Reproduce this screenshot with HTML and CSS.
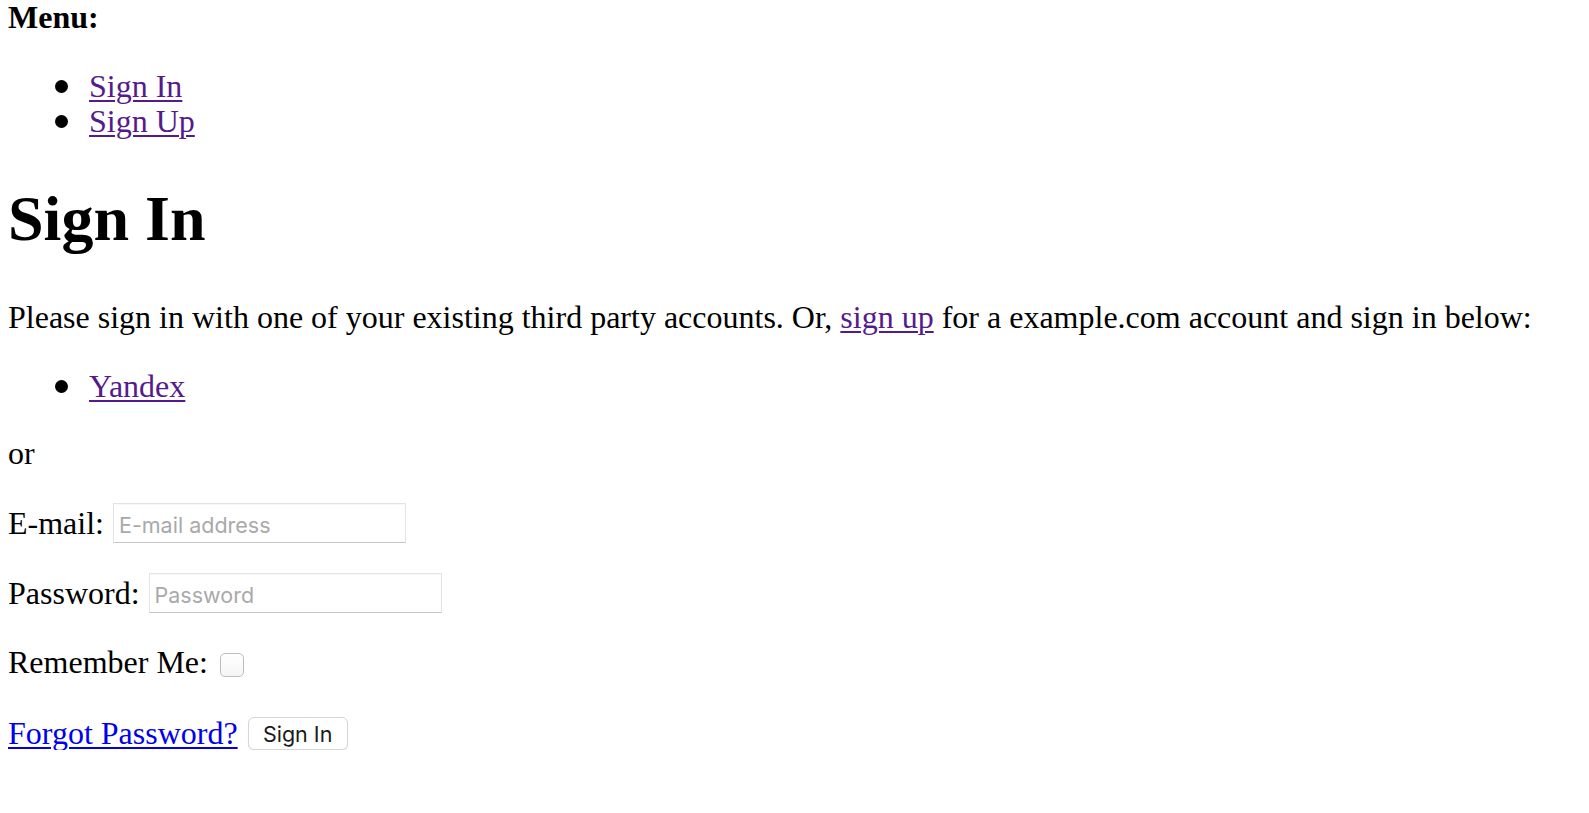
FILE: index.html
```html
<!DOCTYPE html>
<html lang="en">
<head>
<meta charset="utf-8">
<title>Sign In</title>
<link rel="stylesheet" href="styles.css">
</head>
<body>
<div class="menu-title">Menu:</div>
<ul class="menu">
  <li><a class="visited" href="#">Sign In</a></li>
  <li><a class="visited" href="#">Sign Up</a></li>
</ul>
<h1 class="page-title">Sign In</h1>
<p class="intro">Please sign in with one of your existing third party accounts. Or, <a class="visited" href="#">sign up</a> for a example.com account and sign in below:</p>
<ul class="providers">
  <li><a class="visited" href="#">Yandex</a></li>
</ul>
<p class="or">or</p>
<form class="login">
  <div class="row row-email">
    <label class="label" for="email">E-mail:</label>
    <input class="field" id="email" type="email" placeholder="E-mail address">
  </div>
  <div class="row row-password">
    <label class="label" for="password">Password:</label>
    <input class="field" id="password" type="password" placeholder="Password">
  </div>
  <div class="row row-remember">
    <label class="label" for="remember">Remember Me:</label>
    <input class="check" id="remember" type="checkbox">
  </div>
  <div class="row row-actions">
    <a class="forgot" href="#">Forgot Password?</a>
    <button class="submit" type="submit">Sign In</button>
  </div>
</form>
</body>
</html>
```

FILE: styles.css
```css
html, body {
  background: #ffffff;
}

body {
  margin: 0 8px;
  padding-top: 0;
  font-family: "Liberation Serif", "Times New Roman", serif;
  font-size: 32px;
  line-height: 34px;
  color: #000000;
}

a {
  color: #0000ee;
  text-decoration: underline;
  text-decoration-thickness: 2px;
  text-underline-offset: 3px;
}

a.visited {
  color: #551a8b;
}

.menu-title {
  font-weight: bold;
}

.menu,
.providers {
  list-style: none;
  padding-left: 81px;
}

.menu li,
.providers li {
  position: relative;
}

.menu li::before,
.providers li::before {
  content: "";
  position: absolute;
  left: -34px;
  top: 11px;
  width: 13px;
  height: 13px;
  border-radius: 50%;
  background: #000000;
}

.menu {
  margin: 35px 0 0;
}

.menu li + li {
  margin-top: 1px;
}

.page-title {
  margin: 47px 0 47px;
  font-size: 64px;
  line-height: 68px;
  font-weight: bold;
}

.intro {
  margin: 0 0 35px;
  white-space: nowrap;
}

.providers {
  margin: 0 0 33px;
}

.or {
  margin: 0 0 33px;
}

.login {
  margin: 0;
}

.row {
  display: flex;
  align-items: center;
  gap: 9px;
}

.row-password {
  margin-top: 30px;
}

.row-remember {
  margin-top: 32px;
  align-items: flex-start;
  gap: 12px;
}

.row-actions {
  margin-top: 37px;
  gap: 10px;
}

.field {
  box-sizing: border-box;
  flex: 0 0 293px;
  width: 293px;
  height: 40px;
  margin: 0;
  padding: 4px 5px 0;
  border: 1px solid #e3e3e3;
  border-bottom-color: #c4c4c4;
  border-radius: 0;
  background: #ffffff;
  box-shadow: inset 0 1px 1px rgba(0, 0, 0, 0.03);
  font-family: Inter, "Liberation Sans", sans-serif;
  font-size: 21.5px;
  color: #000000;
  outline: none;
}

.field::placeholder {
  color: #a9a9a9;
}

.check {
  appearance: none;
  -webkit-appearance: none;
  box-sizing: border-box;
  flex: 0 0 24px;
  width: 24px;
  height: 24px;
  margin: 8px 0 0;
  border: 1px solid #bdbdbd;
  border-radius: 5px;
  background: linear-gradient(#ffffff, #f5f5f5);
}

.submit {
  box-sizing: border-box;
  flex: 0 0 100px;
  width: 100px;
  height: 33px;
  margin: 0;
  padding: 2px 0 0;
  border: 1px solid #d6d6d6;
  border-radius: 6px;
  background: #ffffff;
  box-shadow: 0 1px 1px rgba(0, 0, 0, 0.08);
  font-family: Inter, "Liberation Sans", sans-serif;
  font-size: 21.5px;
  color: #1a1a1a;
}
```
